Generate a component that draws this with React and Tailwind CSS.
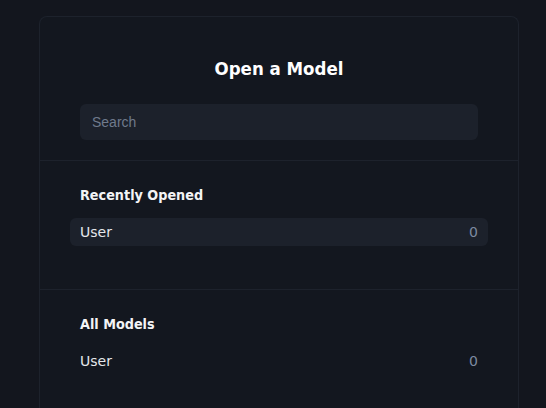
import React from 'react';

const recent = [{ name: 'User', count: 0 }];
const models = [{ name: 'User', count: 0 }];

function ModelRow({ name, count, active }) {
  return (
    <div
      className={`-mx-2.5 flex h-7 items-center justify-between rounded-md px-2.5 text-sm ${
        active ? 'bg-[#1c212b]' : ''
      }`}
    >
      <span className="text-[#e5e7eb]">{name}</span>
      <span className="text-[#7d8ba1]">{count}</span>
    </div>
  );
}

export default function App() {
  return (
    <div className="min-h-screen bg-[#13161e] pt-4 font-['DejaVu_Sans',sans-serif]">
      <div className="ml-[39px] w-[480px] rounded-t-lg border border-b-0 border-[#1d222c] bg-[#13171f]">
        {/* header */}
        <div className="flex flex-col items-center border-b border-[#1d222c] px-10 pb-5 pt-[38px]">
          <h1 className="font-['DejaVu_Sans_Condensed',sans-serif] text-[18.5px] font-bold leading-7 text-white">
            Open a Model
          </h1>
          <input
            type="text"
            placeholder="Search"
            className="mt-[21px] h-9 w-full rounded-md bg-[#1c212b] px-3 font-['Liberation_Sans',sans-serif] text-sm text-white placeholder:text-[#6f7a8c] focus:outline-none"
          />
        </div>

        {/* recently opened */}
        <div className="border-b border-[#1d222c] px-10 pb-[43px] pt-6">
          <h2 className="font-['DejaVu_Sans_Condensed',sans-serif] text-[14.25px] font-bold leading-5 text-[#f3f4f6]">
            Recently Opened
          </h2>
          <div className="mt-[13px]">
            {recent.map((m) => (
              <ModelRow key={m.name} {...m} active />
            ))}
          </div>
        </div>

        {/* all models */}
        <div className="px-10 pb-10 pt-6">
          <h2 className="font-['DejaVu_Sans_Condensed',sans-serif] text-[14.25px] font-bold leading-5 text-[#f3f4f6]">
            All Models
          </h2>
          <div className="mt-[13px]">
            {models.map((m) => (
              <ModelRow key={m.name} {...m} />
            ))}
          </div>
        </div>
      </div>
    </div>
  );
}
